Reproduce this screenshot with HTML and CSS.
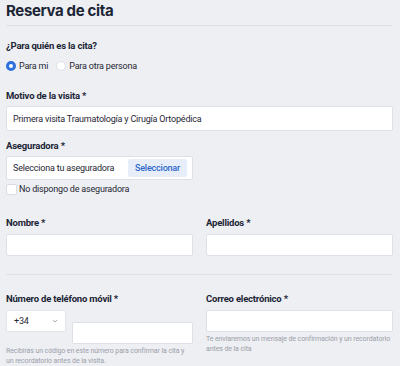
FILE: index.html
```html
<!DOCTYPE html>
<html lang="es">
<head>
<meta charset="utf-8">
<link rel="stylesheet" href="styles.css">
</head>
<body>
<div class="page">
  <h1 class="title">Reserva de cita</h1>

  <div class="field who">
    <div class="label">¿Para quién es la cita?</div>
    <div class="radios">
      <label class="radio"><span class="dot on"></span>Para mi</label>
      <label class="radio"><span class="dot"></span>Para otra persona</label>
    </div>
  </div>

  <div class="field motivo">
    <div class="label">Motivo de la visita *</div>
    <div class="input tall">Primera visita Traumatología y Cirugía Ortopédica</div>
  </div>

  <div class="field aseg">
    <div class="label">Aseguradora *</div>
    <div class="insurer">
      <span>Selecciona tu aseguradora</span>
      <span class="btn">Seleccionar</span>
    </div>
    <label class="check"><span class="box"></span>No dispongo de aseguradora</label>
  </div>

  <div class="grid names">
    <div class="field">
      <div class="label">Nombre *</div>
      <div class="input"></div>
    </div>
    <div class="field">
      <div class="label">Apellidos *</div>
      <div class="input"></div>
    </div>
  </div>

  <div class="grid contact">
    <div class="field">
      <div class="label">Número de teléfono móvil *</div>
      <div class="phone">
        <div class="select">+34
          <svg class="chev" viewBox="0 0 8 5" width="6" height="4"><path d="M1 1l3 3 3-3" fill="none" stroke="#8a9099" stroke-width="1"/></svg>
        </div>
        <div class="input phone-input"></div>
      </div>
      <p class="help">Recibirás un código en este número para confirmar la cita y un recordatorio antes de la visita.</p>
    </div>
    <div class="field">
      <div class="label">Correo electrónico *</div>
      <div class="input"></div>
      <p class="help">Te enviaremos un mensaje de confirmación y un recordatorio antes de la cita</p>
    </div>
  </div>
</div>
</body>
</html>
```
FILE: styles.css
```css
html, body {
  margin: 0;
  padding: 0;
  background: #eeeff3;
}
body {
  font-family: Roboto, "Liberation Sans", sans-serif;
  color: #1f2733;
  font-size: 9px;
  letter-spacing: -0.2px;
}
.page {
  width: 387px;
  padding: 0 7px 0 6px;
}
.title {
  margin: 0;
  font-family: Inter, "Liberation Sans", sans-serif;
  font-weight: 700;
  font-size: 15px;
  letter-spacing: -0.35px;
  color: #1b2535;
  line-height: 20px;
  padding-top: 1px;
  height: 24px;
  border-bottom: 1px solid #dfe1e6;
}
.label {
  font-family: Roboto, "Liberation Sans", sans-serif;
  font-weight: 700;
  font-size: 9.5px;
  letter-spacing: -0.2px;
  color: #1b2535;
  line-height: 12px;
}
.who { margin-top: 14px; }
.radios {
  display: flex;
  gap: 8px;
  margin-top: 8px;
}
.radio {
  display: flex;
  align-items: center;
  gap: 3px;
  line-height: 12px;
}
.dot {
  width: 10px;
  height: 10px;
  border-radius: 50%;
  background: #fff;
  border: 1px solid #dde0e5;
  box-sizing: border-box;
}
.dot.on {
  border: 3px solid #2d6fdd;
  background: #fff;
}
.motivo { margin-top: 18px; }
.input {
  background: #fff;
  border: 1px solid #dde0e6;
  border-radius: 2px;
  height: 22px;
  box-sizing: border-box;
}
.motivo .label { margin-bottom: 4px; }
.input.tall {
  height: 25px;
  display: flex;
  align-items: center;
  padding-left: 6px;
}
.aseg { margin-top: 9px; }
.aseg .label { margin-bottom: 4px; }
.insurer {
  width: 187px;
  height: 24px;
  box-sizing: border-box;
  background: #fff;
  border: 1px solid #dde0e6;
  border-radius: 2px;
  display: flex;
  align-items: center;
  justify-content: space-between;
  padding: 0 5px 0 6px;
  white-space: nowrap;
}
.btn {
  background: #e7eefa;
  color: #2e67c9;
  font-weight: 500;
  border-radius: 2px;
  padding: 0 7px;
  line-height: 18px;
}
.check {
  display: flex;
  align-items: center;
  gap: 2px;
  margin-top: 3px;
  line-height: 12px;
}
.box {
  width: 11px;
  height: 11px;
  box-sizing: border-box;
  background: #fff;
  border: 1px solid #d9dce2;
  border-radius: 2px;
}
.grid {
  display: grid;
  grid-template-columns: 187px 187px;
  column-gap: 13px;
}
.names {
  margin-top: 22px;
  padding-bottom: 18px;
  border-bottom: 1px solid #dfe1e6;
}
.names .label { margin-bottom: 5px; }
.contact { margin-top: 18px; }
.contact .label { margin-bottom: 5px; }
.phone {
  display: flex;
  gap: 6px;
  align-items: flex-start;
}
.select {
  width: 60px;
  height: 22px;
  box-sizing: border-box;
  background: #fff;
  border: 1px solid #e3e5ea;
  border-radius: 2px;
  display: flex;
  align-items: center;
  justify-content: space-between;
  padding: 0 7px 0 7px;
}
.phone-input {
  flex: 1;
  margin-top: 12px;
}
.help {
  margin: 3px 0 0;
  font-size: 7px;
  line-height: 9.5px;
  letter-spacing: -0.1px;
  color: #9aa0a9;
}
```
